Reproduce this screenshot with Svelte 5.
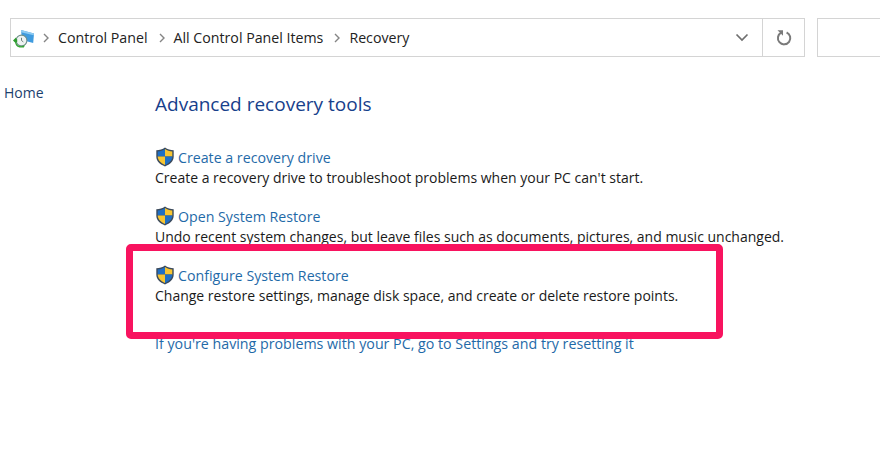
<script>
	const tools = [
		{
			title: 'Create a recovery drive',
			text: "Create a recovery drive to troubleshoot problems when your PC can't start."
		},
		{
			title: 'Open System Restore',
			text: 'Undo recent system changes, but leave files such as documents, pictures, and music unchanged.'
		},
		{
			title: 'Configure System Restore',
			text: 'Change restore settings, manage disk space, and create or delete restore points.'
		}
	];
	const crumbs = ['Control Panel', 'All Control Panel Items', 'Recovery'];
</script>

{#snippet chevron()}
	<svg class="chev" width="8" height="10" viewBox="0 0 8 10">
		<path d="M2 1l4 4-4 4" fill="none" stroke="#858585" stroke-width="1.4" />
	</svg>
{/snippet}

{#snippet shield()}
	<svg class="shield" width="20" height="20" viewBox="0 0 19 20">
		<path d="M9.5 .6C7 2.400 4 3.200 .8 3.200v6.300c0 4.600 3.600 8 8.700 9.900 5.100-1.900 8.700-5.300 8.700-9.900V3.200C15 3.200 12 2.400 9.500 .6z" fill="#3b4a5c" />
		<path d="M9.500 2C7.400 3.400 5 4.200 2.200 4.400v5h7.300z" fill="#1f6fc4" />
		<path d="M9.500 2c2.100 1.400 4.500 2.200 7.300 2.400v5H9.500z" fill="#f7c531" />
		<path d="M2.200 9.400h7.300v8.500C5.400 16.200 2.400 13.300 2.200 9.400z" fill="#f7c531" />
		<path d="M16.800 9.400H9.500v8.500c4.100-1.700 7.100-4.600 7.300-8.500z" fill="#1f6fc4" />
	</svg>
{/snippet}

<div class="page">
	<header class="toolbar">
		<div class="address">
			<svg class="cp-icon" width="22" height="20" viewBox="0 0 22 20">
				<path d="M8 2l13 3.500-.8 9.500L9 12z" fill="#3f9bdf" />
				<path d="M8 2l13 3.500-.3 1.800L8 4.200z" fill="#8fcbf2" />
				<circle cx="8.500" cy="12.500" r="5.400" fill="#eef3f2" stroke="#6f8f8a" stroke-width="1.100" />
				<path d="M8.500 9.800v2.700l1.800 1.400" fill="none" stroke="#5c6f6f" stroke-width=".9" />
				<path d="M0 12.500l3.200-3.300v2h1v2.700h-1v1.900z" fill="#2c9c2c" />
				<path d="M3 13.500c.3 3.200 2.800 5 6 4.600l3-.9-1.200 2.300H6.500C3.500 19 2 16.500 2.200 13.500z" fill="#38a538" />
			</svg>
			{#each crumbs as crumb}
				{@render chevron()}
				<span class="crumb">{crumb}</span>
			{/each}
			<svg class="drop" width="14" height="9" viewBox="0 0 14 9">
				<path d="M1.500 1.500L7 7l5.500-5.500" fill="none" stroke="#6f6f6f" stroke-width="1.700" />
			</svg>
			<div class="refresh">
				<svg width="16" height="17" viewBox="0 0 16 17">
					<path d="M5.200 3.700a6.200 6.200 0 1 0 5.400-.2" fill="none" stroke="#7a7a7a" stroke-width="2" />
					<path d="M1.500 1.200h5.500v5.500z" fill="#7a7a7a" />
				</svg>
			</div>
		</div>
		<div class="search"></div>
	</header>

	<div class="body">
		<nav class="side">Home</nav>
		<main>
			<h1>Advanced recovery tools</h1>
			{#each tools as tool}
				<section class="tool">
					<div class="tool-head">
						{@render shield()}
						<a href="#top">{tool.title}</a>
					</div>
					<p>{tool.text}</p>
				</section>
			{/each}
			<a class="settings" href="#top">If you're having problems with your PC, go to Settings and try resetting it</a>
		</main>
	</div>
	<div class="highlight"></div>
</div>

<style>
	:global(body) {
		background: #fff;
	}

	.page {
		position: relative;
		width: 880px;
		height: 459px;
		overflow: hidden;
		font-family: 'Open Sans', 'Noto Sans', sans-serif;
		font-size: 14px;
		color: #1a1a1a;
	}

	.toolbar {
		display: flex;
		gap: 12px;
		padding: 18px 0 0 10px;
	}

	.address {
		display: flex;
		align-items: center;
		width: 795px;
		height: 39px;
		box-sizing: border-box;
		border: 1px solid #d4d4d4;
		padding-left: 2px;
	}

	.cp-icon {
		margin-right: 7px;
	}

	.chev {
		margin-right: 8px;
	}

	.crumb {
		margin-right: 10px;
		color: #222;
		font-size: 14.2px;
	}

	.drop {
		margin-left: auto;
		margin-right: 13px;
	}

	.refresh {
		display: flex;
		align-items: center;
		justify-content: center;
		width: 41px;
		height: 100%;
		border-left: 1px solid #d4d4d4;
	}

	.search {
		flex: 1;
		height: 39px;
		box-sizing: border-box;
		border: 1px solid #d4d4d4;
		border-right: 0;
	}

	.body {
		display: flex;
		padding-top: 34px;
	}

	.side {
		width: 155px;
		box-sizing: border-box;
		margin-top: -8px;
		color: #1c3f6e;
		padding-left: 4px;
	}

	h1 {
		margin: 0 0 30px;
		font-size: 19px;
		font-weight: 400;
		line-height: 26px;
		color: #17408b;
	}

	.tool {
		height: 59px;
	}

	.tool-head {
		display: flex;
		align-items: center;
		gap: 3px;
		height: 20px;
	}

	a {
		color: #1f6aa8;
		font-size: 14.2px;
		text-decoration: none;
	}

	p {
		margin: 1px 0 0;
		line-height: 20px;
		color: #1a1a1a;
	}

	.settings {
		display: block;
		margin-top: 10px;
		font-size: 14.24px;
	}

	.highlight {
		position: absolute;
		left: 126px;
		top: 244px;
		width: 597px;
		height: 95px;
		box-sizing: border-box;
		border: 7px solid #f8135f;
		border-radius: 5px;
	}
</style>
